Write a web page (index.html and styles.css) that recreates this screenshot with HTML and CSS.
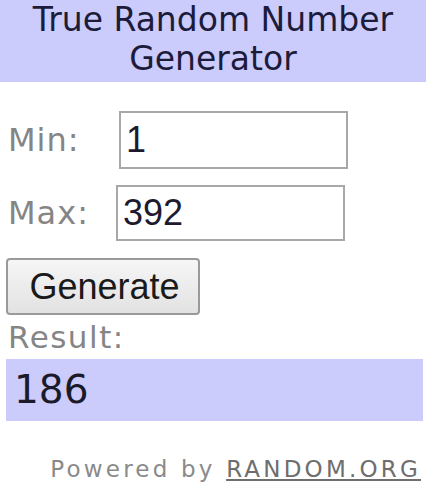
FILE: index.html
```html
<!DOCTYPE html>
<html>
<head>
<meta charset="utf-8">
<link rel="stylesheet" href="styles.css">
</head>
<body>
<div class="widget">
  <div class="title"><div class="title-text">True Random Number Generator</div></div>
  <div class="row row-min">
    <span class="label">Min:</span>
    <input class="field field-min" type="text" value="1">
  </div>
  <div class="row row-max">
    <span class="label">Max:</span>
    <input class="field" type="text" value="392">
  </div>
  <div class="actions">
    <button class="generate" type="button">Generate</button>
  </div>
  <div class="result-label">Result:</div>
  <div class="result">186</div>
  <div class="powered">Powered by <a class="link" href="#">RANDOM.ORG</a></div>
</div>
</body>
</html>
```

FILE: styles.css
```css
html, body {
  margin: 0;
  padding: 0;
  background: #ffffff;
}

.widget {
  width: 426px;
  font-family: "DejaVu Sans", Verdana, sans-serif;
}

.title {
  height: 82px;
  background: #cbcbfc;
  text-align: center;
  color: #1c1c3a;
}

.title-text {
  font-size: 33px;
  line-height: 39px;
  padding: 0 30px;
}

.row {
  display: flex;
  align-items: center;
  padding-left: 8px;
}

.row-min {
  margin-top: 29px;
  height: 58px;
}

.row-max {
  margin-top: 16px;
  height: 56px;
}

.label {
  width: 108px;
  font-size: 32px;
  color: #858585;
  letter-spacing: 1px;
}

.field {
  box-sizing: border-box;
  width: 229px;
  height: 100%;
  margin: 0;
  border: 2px solid #a8a8a8;
  padding: 0 0 0 5px;
  font-family: "Liberation Sans", Arial, sans-serif;
  font-size: 36px;
  color: #1e1a2e;
  background: #ffffff;
  outline: none;
}

.field-min {
  margin-left: 3px;
}

.actions {
  padding-left: 6px;
  margin-top: 17px;
}

.generate {
  box-sizing: border-box;
  width: 194px;
  height: 57px;
  margin: 0;
  padding: 0 0 0 3px;
  border: 2px solid #9a9a9a;
  border-radius: 4px;
  background: linear-gradient(#f6f6f6, #e2e2e2);
  font-family: "Liberation Sans", Arial, sans-serif;
  font-size: 36px;
  color: #1a1a1a;
}

.result-label {
  padding-left: 8px;
  font-size: 31px;
  line-height: 44px;
  letter-spacing: 1.5px;
  color: #858585;
}

.result {
  margin: 0 3px 0 6px;
  height: 62px;
  box-sizing: border-box;
  padding-left: 8px;
  background: #cbcbfc;
  font-size: 39px;
  line-height: 62px;
  color: #1a1a2a;
}

.powered {
  text-align: right;
  padding-right: 5px;
  margin-top: 35px;
  font-size: 23px;
  letter-spacing: 3.2px;
  color: #8a8a8a;
}

.link {
  color: #6e6e6e;
  text-decoration: underline;
}
```
